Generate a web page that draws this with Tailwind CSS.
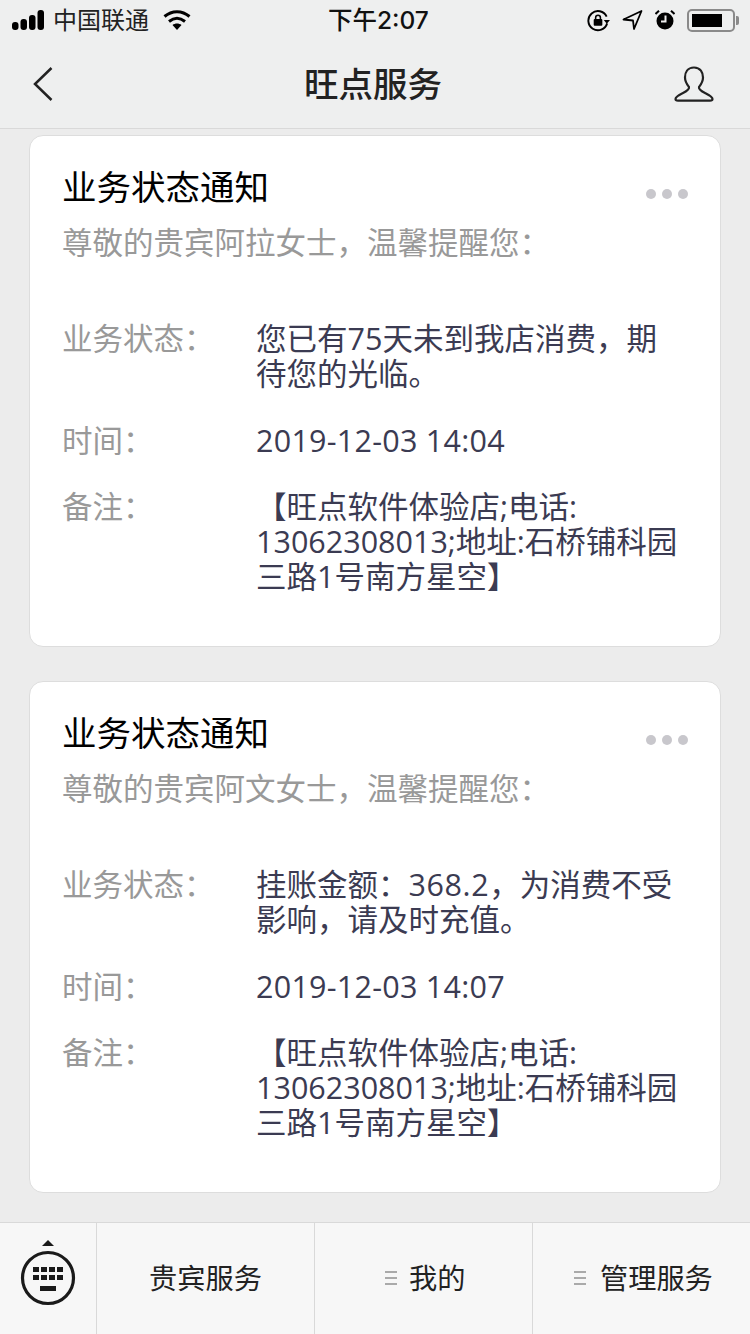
<!DOCTYPE html>
<html lang="zh-CN">
<head>
    <meta charset="UTF-8">
    <meta name="viewport" content="width=device-width, initial-scale=1.0">
    <title>旺点服务</title>
    <script src="https://cdn.jsdelivr.net/npm/@tailwindcss/browser@4"></script>
</head>
<body class="bg-[#ececec] font-['Open_Sans','Noto_Sans_CJK_SC',sans-serif]">
<div class="w-[750px] h-[1334px] flex flex-col overflow-hidden">
    <!-- status bar + nav -->
    <header class="h-[129px] shrink-0 bg-[#eeefef] border-b border-[#d9d9d9]">
        <div class="h-[40px] relative flex items-center justify-between pl-[12px] pr-[11px] text-black">
            <div class="flex items-center">
                <svg width="37" height="20" viewBox="0 0 37 20" fill="#000"><rect x="0" y="12" width="6.500" height="8" rx="3"/><rect x="8.500" y="9" width="6.500" height="11" rx="3"/><rect x="17" y="5" width="6.500" height="15" rx="3"/><rect x="25.500" y="0" width="6.500" height="20" rx="3"/></svg>
                <span class="text-[24px] leading-[40px] ml-[4px] text-[#222]">中国联通</span>
                <svg class="ml-[14px]" width="28" height="20" viewBox="0 0 28 20" fill="none" stroke="#000" stroke-width="3"><path d="M1.500 6.500C9 0 19 0 26.500 6.500"/><path d="M6 11.500C11 7.500 17 7.500 22 11.500"/><path d="M14 20L9.500 15C12 13 16 13 18.500 15Z" fill="#000" stroke="none"/></svg>
            </div>
            <div class="absolute left-[328px] top-0 text-[24.500px] leading-[40px] font-medium text-[#111] font-['Inter','Noto_Sans_CJK_SC',sans-serif]">下午2:07</div>
            <div class="flex items-center">
                <svg width="23" height="23" viewBox="0 0 24 24" fill="none"><path d="M20.500 8A10 10 0 1 0 21 15" stroke="#000" stroke-width="2"/><path d="M17.500 11.500H24L20.700 15.500Z" fill="#000"/><rect x="7" y="10.500" width="9" height="7" rx="1" fill="#000"/><path d="M9 11V9a2.500 2.500 0 0 1 5 0v2" stroke="#000" stroke-width="1.600"/></svg>
                <svg class="ml-[12px]" width="21" height="20" viewBox="0 0 21 20" fill="none" stroke="#000" stroke-width="1.800" stroke-linejoin="round"><path d="M19.500 1L1.500 9.500L11 10.500L12 19Z"/></svg>
                <svg class="ml-[12px]" width="20" height="20" viewBox="0 0 20 20"><circle cx="10" cy="11" r="8.500" fill="#000"/><path d="M10.500 5.500V11.500H6" stroke="#eee" stroke-width="2" fill="none"/><path d="M0.500 4L4 0.800M19.500 4L16 0.800" stroke="#000" stroke-width="2"/></svg>
                <div class="ml-[12px] w-[48px] h-[23px] border-2 border-[#8a8a8a] rounded-[5px] p-[3px]"><div class="w-[30px] h-full bg-black"></div></div>
                <div class="w-[3px] h-[9px] bg-[#8a8a8a] rounded-r-[2px] ml-[1px]"></div>
            </div>
        </div>
        <div class="h-[88px] flex items-center justify-between pl-[33px] pr-[36px] relative">
            <svg width="20" height="34" viewBox="0 0 20 34" fill="none" stroke="#222" stroke-width="2.500"><path d="M18.500 1L2 17L18.500 33"/></svg>
            <div class="absolute inset-x-0 top-0 pr-[4px] text-center text-[34.500px] leading-[88px] font-medium text-[#222]">旺点服务</div>
            <svg width="40" height="36" viewBox="0 0 40 36" fill="none" stroke="#222" stroke-width="2.200"><path d="M20 1.500C13.500 1.500 11 6.500 11 11.500C11 16 13.500 19 15 21C15.500 23 13 25 9 27C5 29 1.500 30.500 1.500 33C1.500 34.500 2.500 34.700 4 34.700H36C37.500 34.700 38.500 34.500 38.500 33C38.500 30.500 35 29 31 27C27 25 24.500 23 25 21C26.500 19 29 16 29 11.500C29 6.500 26.500 1.500 20 1.500Z"/></svg>
        </div>
    </header>

    <!-- messages -->
    <main class="flex-1 pt-[6px] px-[29px] flex flex-col gap-[34px] overflow-hidden">
        <section class="h-[512px] shrink-0 bg-white border border-[#dddddd] rounded-[14px] pl-[32px] pr-[30px] pt-[27px] relative">
            <h2 class="text-[34.500px] leading-[48px] text-black">业务状态通知</h2>
            <div class="absolute right-[32px] top-[53px] flex gap-[6px]"><span class="w-[10px] h-[10px] rounded-full bg-[#c8c7cc]"></span><span class="w-[10px] h-[10px] rounded-full bg-[#c8c7cc]"></span><span class="w-[10px] h-[10px] rounded-full bg-[#c8c7cc]"></span></div>
            <p class="text-[30.500px] leading-[40px] text-[#999] mt-[11px]">尊敬的贵宾阿拉女士，温馨提醒您：</p>
            <dl class="mt-[59px] grid grid-cols-[194px_1fr] gap-y-[32px] text-[30.500px] leading-[35px]">
                <dt class="text-[#999]">业务状态：</dt>
                <dd class="text-[#3b3b52] w-[426px]">您已有75天未到我店消费，期待您的光临。</dd>
                <dt class="text-[#999]">时间：</dt>
                <dd class="text-[#3b3b52] tracking-[0.25px]">2019-12-03 14:04</dd>
                <dt class="text-[#999] -mt-[1px]">备注：</dt>
                <dd class="text-[#3b3b52] w-[426px] -mt-[1px]">【旺点软件体验店;电话:<br>13062308013;地址:石桥铺科园<br>三路1号南方星空】</dd>
            </dl>
        </section>
        <section class="h-[512px] shrink-0 bg-white border border-[#dddddd] rounded-[14px] pl-[32px] pr-[30px] pt-[27px] relative">
            <h2 class="text-[34.500px] leading-[48px] text-black">业务状态通知</h2>
            <div class="absolute right-[32px] top-[53px] flex gap-[6px]"><span class="w-[10px] h-[10px] rounded-full bg-[#c8c7cc]"></span><span class="w-[10px] h-[10px] rounded-full bg-[#c8c7cc]"></span><span class="w-[10px] h-[10px] rounded-full bg-[#c8c7cc]"></span></div>
            <p class="text-[30.500px] leading-[40px] text-[#999] mt-[11px]">尊敬的贵宾阿文女士，温馨提醒您：</p>
            <dl class="mt-[59px] grid grid-cols-[194px_1fr] gap-y-[32px] text-[30.500px] leading-[35px]">
                <dt class="text-[#999]">业务状态：</dt>
                <dd class="text-[#3b3b52] w-[426px]">挂账金额：<span class="tracking-[0.6px]">368.2</span>，为消费不受影响，请及时充值。</dd>
                <dt class="text-[#999]">时间：</dt>
                <dd class="text-[#3b3b52] tracking-[0.25px]">2019-12-03 14:07</dd>
                <dt class="text-[#999] -mt-[1px]">备注：</dt>
                <dd class="text-[#3b3b52] w-[426px] -mt-[1px]">【旺点软件体验店;电话:<br>13062308013;地址:石桥铺科园<br>三路1号南方星空】</dd>
            </dl>
        </section>
    </main>

    <!-- bottom menu -->
    <footer class="h-[112px] shrink-0 bg-[#f7f7f7] border-t border-[#d9d9d9] flex text-[#222] text-[28.200px]">
        <div class="w-[97px] border-r border-[#d9d9d9] flex justify-center pt-[16px] pr-[1px]">
            <svg width="56" height="68" viewBox="0 0 56 68" fill="#1a1a1a"><path d="M28 1L34 7H22Z"/><circle cx="28" cy="39" r="25.500" fill="none" stroke="#1a1a1a" stroke-width="3.200"/><rect x="13" y="28" width="6" height="5"/><rect x="21" y="28" width="6" height="5"/><rect x="29" y="28" width="6" height="5"/><rect x="37" y="28" width="6" height="5"/><rect x="13" y="36" width="6" height="5"/><rect x="21" y="36" width="6" height="5"/><rect x="29" y="36" width="6" height="5"/><rect x="37" y="36" width="6" height="5"/><rect x="20" y="47" width="16" height="5"/></svg>
        </div>
        <div class="w-[218px] border-r border-[#d9d9d9] flex items-center justify-center">贵宾服务</div>
        <div class="w-[218px] border-r border-[#d9d9d9] flex items-center pl-[70px]">
            <svg width="12" height="15" viewBox="0 0 12 15" fill="#aaa"><rect width="12" height="2"/><rect y="6" width="12" height="2"/><rect y="12" width="12" height="2"/></svg>
            <span class="ml-[12px]">我的</span>
        </div>
        <div class="flex-1 flex items-center pl-[41px]">
            <svg width="12" height="15" viewBox="0 0 12 15" fill="#aaa"><rect width="12" height="2"/><rect y="6" width="12" height="2"/><rect y="12" width="12" height="2"/></svg>
            <span class="ml-[14px]">管理服务</span>
        </div>
    </footer>
</div>
</body>
</html>
